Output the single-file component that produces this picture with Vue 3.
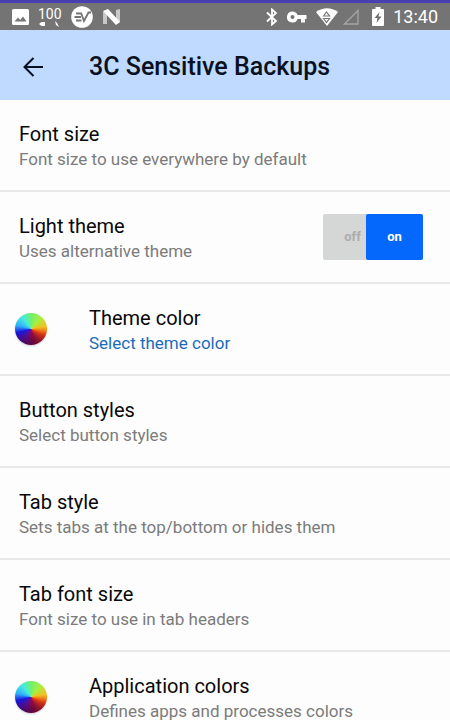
<script setup>
import { ref } from 'vue'

const lightTheme = ref(true)

const settings = [
  { id: 'font', title: 'Font size', summary: 'Font size to use everywhere by default' },
  { id: 'light', title: 'Light theme', summary: 'Uses alternative theme', toggle: true },
  { id: 'theme', title: 'Theme color', summary: 'Select theme color', wheel: true, accent: true },
  { id: 'button', title: 'Button styles', summary: 'Select button styles' },
  { id: 'tab', title: 'Tab style', summary: 'Sets tabs at the top/bottom or hides them' },
  { id: 'tabfont', title: 'Tab font size', summary: 'Font size to use in tab headers' },
  { id: 'apps', title: 'Application colors', summary: 'Defines apps and processes colors', wheel: true }
]
</script>

<template>
  <div class="screen">
    <div class="status">
      <div class="group notices">
        <svg width="17" height="16" viewBox="0 0 17 16" aria-hidden="true">
          <path fill="#fff" fill-rule="evenodd" d="M1.500 0h14Q17 0 17 1.500v13q0 1.500-1.500 1.500h-14Q0 16 0 14.500v-13Q0 0 1.500 0ZM2.500 12.500h12L11 7.500 8.200 11 6 8.500Z" />
        </svg>
        <span class="battery-level">
          <span>100</span>
          <svg width="22" height="6" viewBox="0 0 22 6" aria-hidden="true">
            <path fill="#fff" d="M1 3 3.500 1H7v4H3.500ZM17 0l2 2 2 4-3-2Z" />
          </svg>
        </span>
        <svg width="22" height="22" viewBox="0 0 22 22" aria-hidden="true">
          <circle cx="11" cy="11" r="10.800" fill="#fff" />
          <path fill="none" stroke="#747474" stroke-width="1.800" d="M5 7.500h6M3.500 11h6.500M5 14.500h5.500M10.500 8l2.500 7L17.500 6.500H20" />
        </svg>
        <svg width="19" height="16" viewBox="0 0 19 16" aria-hidden="true">
          <path fill="#c8c8c8" d="M1 3 5 1v14H1ZM14 1l4-1v13l-4 2Z" />
          <path fill="#fff" d="M1 2 6 0l12 13-4 3Z" />
        </svg>
      </div>
      <div class="group system">
        <svg width="12" height="18" viewBox="0 0 12 18" aria-hidden="true">
          <path fill="none" stroke="#fff" stroke-width="1.800" d="m1 4.500 9 8.500-4 3.500v-15L10 5l-9 8.500" />
        </svg>
        <svg width="20" height="12" viewBox="0 0 20 12" aria-hidden="true">
          <path fill="#fff" fill-rule="evenodd" d="M5.500.5a5.500 5.500 0 0 1 5.100 3.500H19.500v4H18v3.500h-4V8h-3.400A5.500 5.500 0 1 1 5.500.5Zm0 3.500a2 2 0 1 0 0 4 2 2 0 0 0 0-4Z" />
        </svg>
        <span class="network">
          <svg width="22" height="18" viewBox="0 0 22 18" aria-hidden="true">
            <path fill="#fff" d="M0 4Q11-3.500 22 4L11 18Z" />
            <path fill="none" stroke="#777" stroke-width="1.200" d="m7.500 8 3-4 3 4Zm0 2.500 3 4 3-4Z" />
          </svg>
          <svg width="16" height="16" viewBox="0 0 16 16" aria-hidden="true">
            <path fill="none" stroke="#a3a3a3" stroke-width="1.400" d="M15 1.500v13.500H1.500Z" />
          </svg>
        </span>
        <svg class="battery" width="12" height="19" viewBox="0 0 12 19" aria-hidden="true">
          <path fill="#fff" d="M3.500 0h5v2H11q1 0 1 1v15q0 1-1 1H1q-1 0-1-1V3q0-1 1-1h2.500Z" />
          <path fill="#707070" d="M7.500 5 2.500 11h3L4.500 16l5-6.500h-3Z" />
        </svg>
        <time>13:40</time>
      </div>
    </div>

    <header class="bar">
      <button class="back" type="button" aria-label="Back">
        <svg width="22" height="22" viewBox="0 0 22 22" aria-hidden="true">
          <path fill="none" stroke="#091020" stroke-width="2" d="M21 11H3M11.500 2 2.500 11l9 9" />
        </svg>
      </button>
      <h1>3C Sensitive Backups</h1>
    </header>

    <main class="list">
      <component
        :is="item.toggle ? 'label' : 'button'"
        v-for="item in settings"
        :key="item.id"
        :type="item.toggle ? undefined : 'button'"
        class="row"
      >
        <span v-if="item.wheel" class="icon"><span class="wheel"></span></span>
        <span class="text">
          <span class="title">{{ item.title }}</span>
          <span class="summary" :class="{ accent: item.accent }">{{ item.summary }}</span>
        </span>
        <span v-if="item.toggle" class="switch" :class="{ active: lightTheme }">
          <input v-model="lightTheme" type="checkbox" role="switch" aria-label="Light theme" />
          <span class="off">off</span>
          <span class="on">on</span>
        </span>
      </component>
    </main>
  </div>
</template>

<style>
body {
  margin: 0;
  background: #fdfdfd;
}
</style>

<style scoped>
.screen {
  display: flex;
  flex-direction: column;
  height: 100vh;
  overflow: hidden;
  font-family: Roboto, "Liberation Sans", sans-serif;
  color: #080808;
}
.status {
  flex: none;
  box-sizing: border-box;
  height: 30px;
  padding: 0 12px;
  display: flex;
  justify-content: space-between;
  border-top: 3px solid #4740b0;
  background: #747474;
  color: #fff;
}
.group,
.network {
  display: flex;
  align-items: center;
}
.group svg {
  display: block;
  flex: none;
}
.notices {
  gap: 9px;
}
.battery-level {
  display: flex;
  flex-direction: column;
  font-size: 14px;
  line-height: 14px;
}
.system {
  gap: 9px;
}
.system time {
  font-size: 18px;
  line-height: 24px;
}
.network {
  gap: 5px;
}
.battery {
  margin-left: 4px;
}
.bar {
  flex: none;
  display: flex;
  align-items: center;
  height: 70px;
  padding: 3px 20px 0;
  box-sizing: border-box;
  background: #c0d9fe;
}
.back {
  width: 69px;
  padding: 0 2px;
  border: 0;
  background: none;
  text-align: left;
}
.back svg {
  display: block;
}
.bar h1 {
  margin: 0;
  font-size: 25px;
  line-height: 32px;
  font-weight: 500;
  color: #091020;
}
.list {
  flex: 1;
  min-height: 0;
  overflow-y: auto;
  scrollbar-width: none;
}
.row {
  display: flex;
  align-items: center;
  box-sizing: border-box;
  width: 100%;
  height: 92px;
  padding: 0 27px 0 19px;
  border: 0;
  border-bottom: 2px solid #e8e8e8;
  background: #fdfdfd;
  font: inherit;
  color: inherit;
  text-align: left;
  cursor: pointer;
}
.icon {
  flex: none;
  width: 70px;
}
.wheel {
  display: block;
  width: 32px;
  height: 32px;
  margin-left: -4px;
  border-radius: 50%;
  background:
    linear-gradient(transparent 55%, rgba(40, 0, 40, 0.5)),
    conic-gradient(#6ff06a, #a8f040 40deg, #f0c020 80deg, #f04010 115deg, #a00840 165deg, #6010a0 210deg, #1818e0 255deg, #30b0f8 285deg, #48ece0 325deg, #6ff06a);
  box-shadow: 0 1px 2px rgba(0, 0, 0, 0.2);
}
.text {
  flex: 1;
  display: flex;
  flex-direction: column;
  padding-top: 2px;
}
.title {
  font-size: 20px;
  line-height: 26px;
}
.summary {
  font-size: 17px;
  line-height: 24px;
  color: #7b7b7b;
}
.summary.accent {
  color: #1b6cb8;
}
.switch {
  position: relative;
  display: flex;
  width: 100px;
  height: 46px;
  border-radius: 2px;
  background: #d5d7d7;
  font-size: 13px;
  line-height: 46px;
  font-weight: 700;
  text-align: center;
}
.switch input {
  position: absolute;
  inset: 0;
  width: 100%;
  height: 100%;
  margin: 0;
  opacity: 0;
  cursor: pointer;
}
.off,
.on {
  flex: 1;
  color: #acacac;
}
.off {
  padding-left: 16px;
}
.on {
  flex: none;
  width: 57px;
  border-radius: 2px;
}
.active .on {
  background: #0468fc;
  color: #fff;
}
</style>
